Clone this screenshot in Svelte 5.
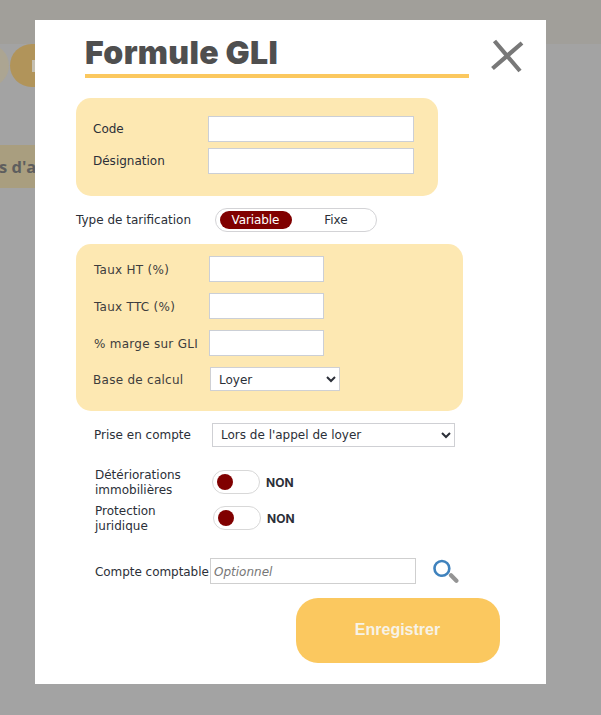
<script>
  const rates = [
    { label: 'Taux HT (%)' },
    { label: 'Taux TTC (%)' },
    { label: '% marge sur GLI' }
  ];
</script>

<div class="page">
  <div class="top-strip"></div>
  <div class="blob-a"></div>
  <div class="blob-b"><span class="blob-notch"></span></div>
  <div class="tab"><span>s d'a</span></div>

  <div class="modal">
    <header class="head">
      <h1>Formule GLI</h1>
      <svg class="close" width="34" height="34" viewBox="0 0 34 34" aria-label="Fermer">
        <path d="M4.5 2 L30 32 M32 4 L2.5 29.5" stroke="#787878" stroke-width="4.2" fill="none" />
      </svg>
    </header>

    <section class="panel panel-one">
      <div class="row-one"><label for="code">Code</label><input id="code" class="wide" /></div>
      <div class="row-one"><label for="des">Désignation</label><input id="des" class="wide" /></div>
    </section>

    <div class="tarif">
      <span class="tarif-label">Type de tarification</span>
      <div class="seg">
        <span class="seg-on">Variable</span>
        <span class="seg-off">Fixe</span>
      </div>
    </div>

    <section class="panel panel-two">
      {#each rates as r}
        <div class="row-two"><span class="lbl">{r.label}</span><input class="short" /></div>
      {/each}
      <div class="row-base">
        <span class="lbl">Base de calcul</span>
        <select class="sel-base"><option>Loyer</option></select>
      </div>
    </section>

    <div class="prise">
      <span class="prise-label">Prise en compte</span>
      <select class="sel-prise"><option>Lors de l'appel de loyer</option></select>
    </div>

    <div class="opt opt-a">
      <span class="opt-label">Détériorations immobilières</span>
      <span class="switch"><i></i></span>
      <b>NON</b>
    </div>
    <div class="opt opt-b">
      <span class="opt-label">Protection juridique</span>
      <span class="switch"><i></i></span>
      <b>NON</b>
    </div>

    <div class="compte">
      <span class="compte-label">Compte comptable</span>
      <input class="compte-input" placeholder="Optionnel" />
      <svg class="loupe" width="26" height="26" viewBox="0 0 26 26" aria-label="Rechercher">
        <circle cx="8.9" cy="10.4" r="7.4" fill="none" stroke="#3f82bd" stroke-width="2.6" />
        <path d="M18 17.3 L23.4 22.8" stroke="#949494" stroke-width="4.2" stroke-linecap="round" />
      </svg>
    </div>

    <div class="actions">
      <button class="save">Enregistrer</button>
    </div>
  </div>
</div>

<style>
  :global(body) {
    margin: 0;
    background: #a3a3a3;
  }
  .page {
    position: relative;
    width: 601px;
    height: 715px;
    overflow: hidden;
    background: #a3a3a3;
    font-family: "DejaVu Sans", sans-serif;
    font-size: 12px;
    color: #2b2f38;
  }
  .top-strip {
    position: absolute;
    left: 0;
    top: 0;
    width: 601px;
    height: 44px;
    background: #a19f9a;
  }
  .blob-a {
    position: absolute;
    left: -34px;
    top: 44px;
    width: 43px;
    height: 43px;
    border-radius: 50%;
    background: #aca592;
  }
  .blob-b {
    position: absolute;
    left: 10px;
    top: 44px;
    width: 50px;
    height: 43px;
    border-radius: 22px;
    background: #b1945a;
  }
  .blob-notch {
    position: absolute;
    left: 22px;
    top: 16px;
    width: 6px;
    height: 12px;
    background: #c4bfb1;
  }
  .tab {
    position: absolute;
    left: 0;
    top: 145px;
    width: 50px;
    height: 43px;
    background: #a99e7f;
    font-weight: 700;
    font-family: "Open Sans", sans-serif;
    font-size: 16.5px;
    line-height: 43px;
    color: #5e5e5e;
  }
  .tab span {
    display: block;
    margin-left: -1px;
    white-space: nowrap;
  }
  .modal {
    position: absolute;
    left: 35px;
    top: 20px;
    width: 511px;
    height: 664px;
    background: #fff;
  }
  .head {
    position: relative;
    margin: 0 0 0 50px;
    width: 384px;
    height: 58px;
    border-bottom: 4px solid #fbc85f;
    box-sizing: border-box;
  }
  h1 {
    margin: 0;
    padding-top: 13px;
    font-family: "Inter", sans-serif;
    font-weight: 900;
    font-size: 32px;
    line-height: 40px;
    letter-spacing: 0.3px;
    white-space: nowrap;
    color: #4f4f4f;
  }
  .close {
    position: absolute;
    left: 405px;
    top: 19px;
  }
  .panel {
    margin-left: 41px;
    box-sizing: border-box;
    background: #fde8b2;
    border-radius: 15px;
  }
  .panel-one {
    width: 362px;
    height: 98px;
    margin-top: 20px;
    padding: 18px 0 0 17px;
    display: flex;
    flex-direction: column;
    gap: 6px;
  }
  .row-one {
    display: grid;
    grid-template-columns: 115px 206px;
    align-items: center;
  }
  input {
    box-sizing: border-box;
    display: block;
    margin: 0;
    padding: 0 4px;
    height: 26px;
    background: #fff;
    border: 1px solid #cbcfd6;
    border-radius: 0;
    outline: none;
  }
  .wide {
    width: 206px;
  }
  .tarif {
    display: flex;
    align-items: center;
    margin: 12px 0 12px 41px;
    height: 24px;
  }
  .tarif-label {
    width: 139px;
  }
  .seg {
    box-sizing: border-box;
    width: 162px;
    height: 24px;
    padding: 2px 4px;
    display: flex;
    align-items: center;
    border: 1px solid #d3d3d6;
    border-radius: 12px;
  }
  .seg-on {
    width: 72px;
    height: 18px;
    line-height: 18px;
    text-align: center;
    letter-spacing: -0.1px;
    color: #fff;
    background: #800000;
    border-radius: 9px;
    padding-right: 1px;
    box-sizing: border-box;
  }
  .seg-off {
    flex: 1;
    text-align: center;
    padding-left: 8px;
  }
  .panel-two {
    width: 387px;
    height: 167px;
    padding: 12px 0 0 18px;
    display: flex;
    flex-direction: column;
    gap: 11px;
    color: #3d3d3d;
  }
  .lbl {
    padding-top: 2px;
    letter-spacing: 0.27px;
    white-space: nowrap;
  }
  .row-two {
    display: grid;
    grid-template-columns: 115px 115px;
    align-items: center;
  }
  .short {
    width: 115px;
  }
  .row-base {
    display: grid;
    grid-template-columns: 117px 130px;
    align-items: center;
    margin-left: -1px;
  }
  select {
    box-sizing: border-box;
    display: block;
    height: 24px;
    margin: 0;
    padding: 1px 4px 0;
    background: #fff;
    border: 1px solid #cfd0d4;
    border-radius: 0;
    font-family: "DejaVu Sans", sans-serif;
    font-size: 12px;
    color: #2b2f38;
  }
  .sel-base {
    width: 130px;
  }
  .prise {
    display: grid;
    grid-template-columns: 118px 243px;
    align-items: center;
    margin: 12px 0 0 59px;
  }
  .sel-prise {
    width: 243px;
    padding-top: 0;
  }
  .opt {
    display: grid;
    grid-template-columns: 117px 48px auto;
    align-items: center;
    margin-left: 60px;
    height: 30px;
    line-height: 15px;
  }
  .opt-a {
    margin-top: 19px;
  }
  .opt-b {
    margin-top: 6px;
    grid-template-columns: 118px 48px auto;
  }
  .opt-label {
    width: 100px;
    padding-top: 2px;
  }
  .switch {
    position: relative;
    box-sizing: border-box;
    display: block;
    width: 48px;
    height: 24px;
    border: 1px solid #d8d8d8;
    border-radius: 12px;
    background: #fff;
  }
  .switch i {
    position: absolute;
    left: 4px;
    top: 3px;
    width: 16px;
    height: 16px;
    border-radius: 50%;
    background: #800000;
  }
  .opt b {
    margin-left: 6px;
    font-family: "Inter", sans-serif;
    font-weight: 700;
    font-size: 12px;
    color: #2b2f38;
  }
  .compte {
    display: grid;
    grid-template-columns: 115px 206px 26px;
    align-items: center;
    margin: 26px 0 0 60px;
    height: 26px;
  }
  .compte-label {
    padding-top: 2px;
    letter-spacing: -0.05px;
    white-space: nowrap;
  }
  .compte-input {
    width: 206px;
    border-color: #cfcfcf;
    padding: 2px 4px 0 3px;
    font-family: "DejaVu Sans", sans-serif;
    font-size: 12px;
    font-style: italic;
  }
  .compte-input::placeholder {
    color: #777;
  }
  .loupe {
    margin-left: 17px;
  }
  .actions {
    margin: 14px 0 0 261px;
  }
  .save {
    display: block;
    width: 204px;
    height: 65px;
    border: 0;
    border-radius: 22px;
    padding: 0 1px 2px 0;
    background: #fbc85f;
    color: #f7f3e8;
    font-family: "Liberation Sans", sans-serif;
    font-weight: 700;
    font-size: 16px;
  }
</style>
